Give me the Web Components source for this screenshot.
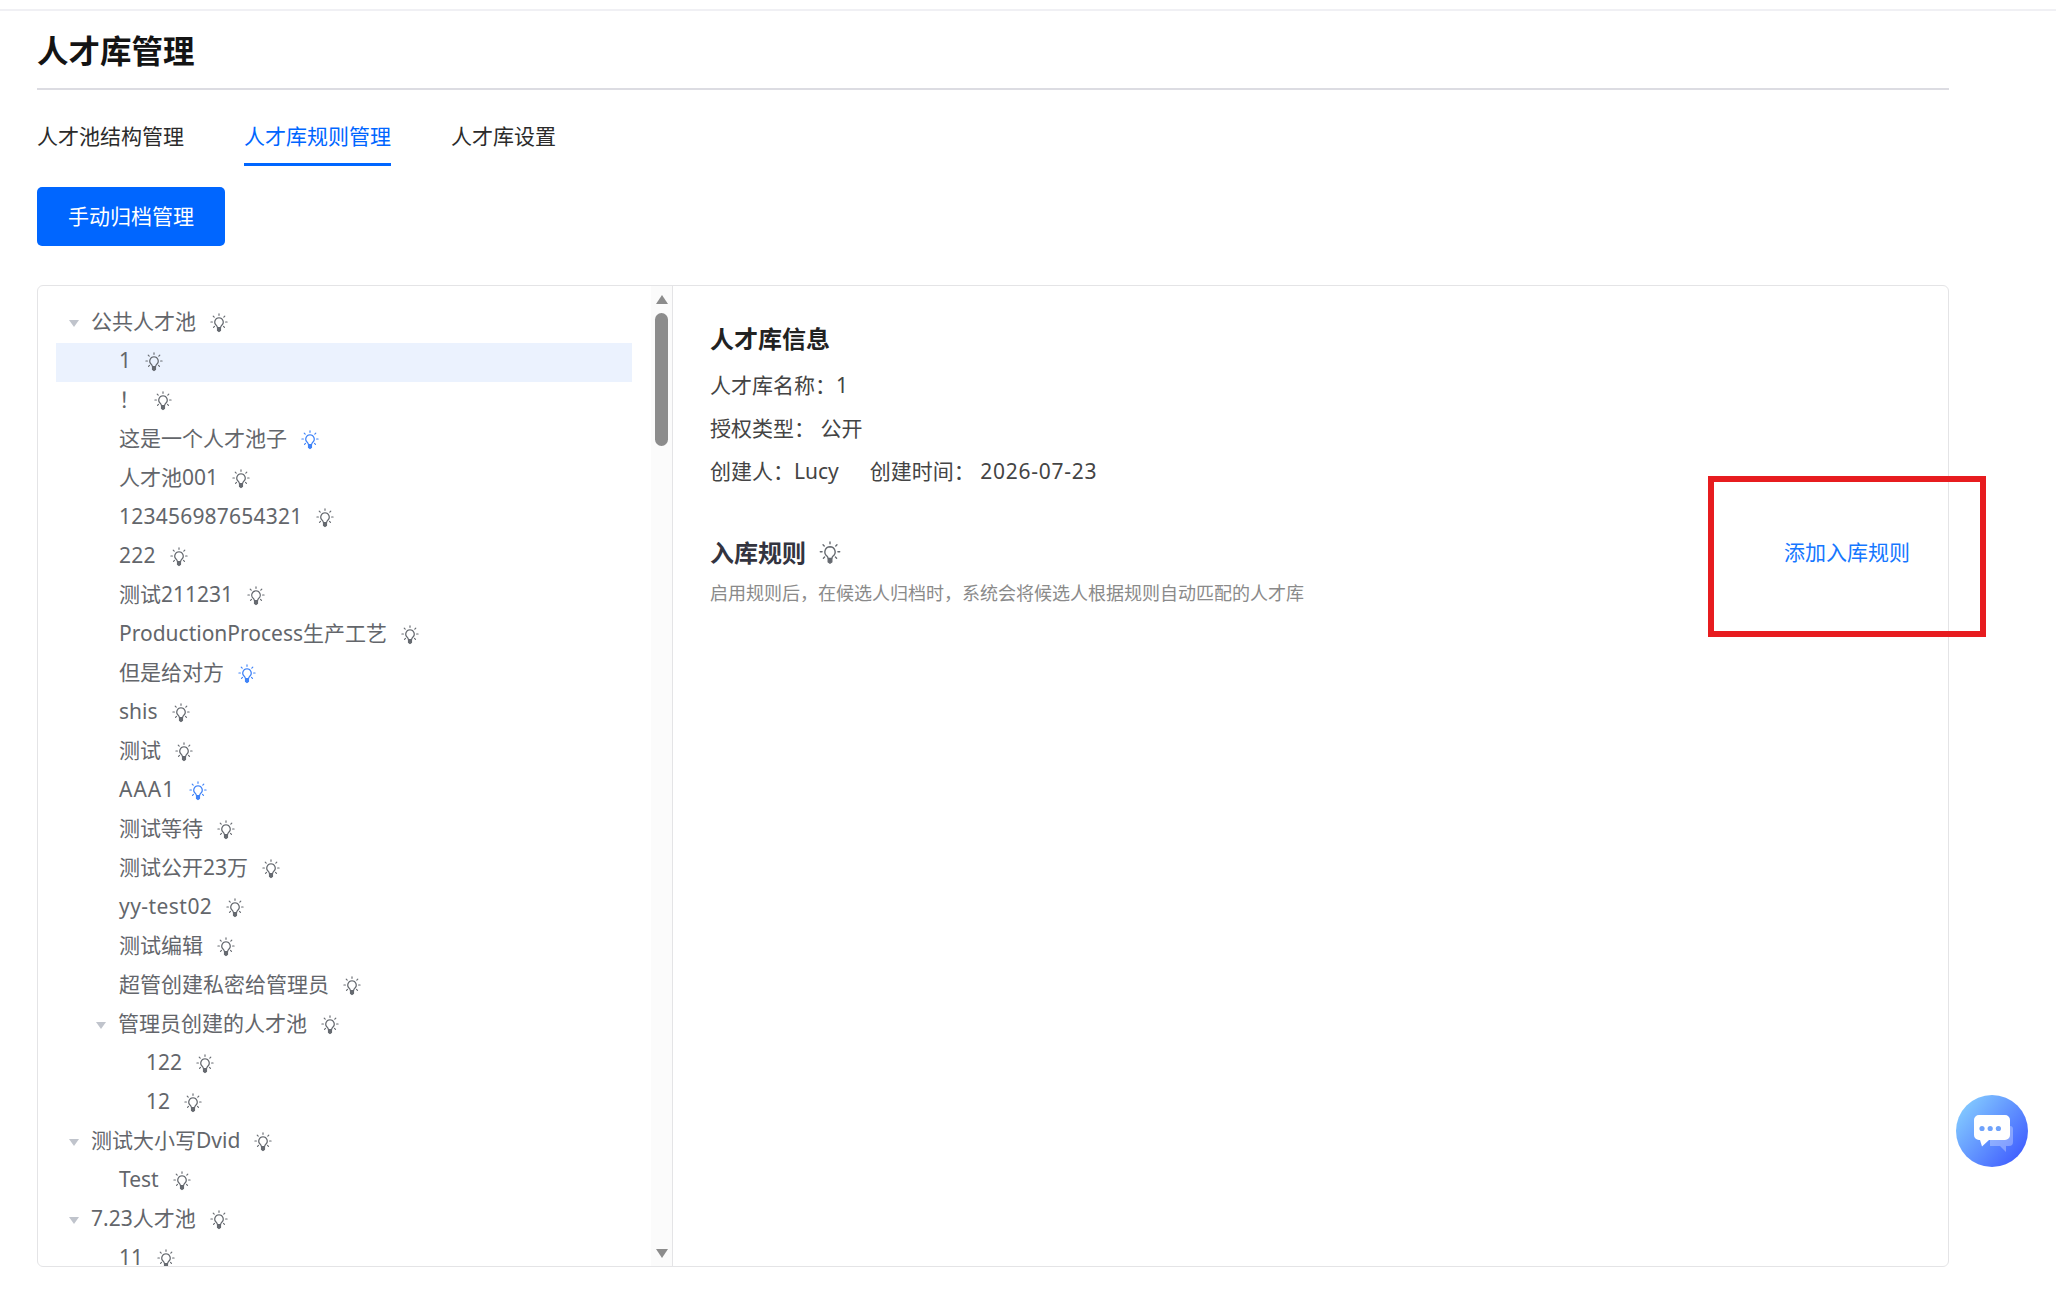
<!DOCTYPE html>
<html lang="zh-CN">
<head>
<meta charset="utf-8">
<title>人才库管理</title>
<style>
    html, body { margin: 0; padding: 0; background: #fff; }
    body { font-family: "Noto Sans", "Noto Sans CJK SC", "Liberation Sans", sans-serif; }
</style>
</head>
<body>
<talent-page>
    <talent-tabs slot="tabs"></talent-tabs>
    <talent-tree slot="tree"></talent-tree>
    <talent-info slot="info"></talent-info>
</talent-page>
<note-box></note-box>
<chat-button></chat-button>

<script>
/* Data for the tree: [label, level, has arrow, blue bulb, selected] */
const treeRows = [
    ['公共人才池', 0, true],
    ['1', 1, false, false, true],
    ['！', 1],
    ['这是一个人才池子', 1, false, true],
    ['人才池001', 1],
    ['123456987654321', 1],
    ['222', 1],
    ['测试211231', 1],
    ['ProductionProcess生产工艺', 1],
    ['但是给对方', 1, false, true],
    ['shis', 1],
    ['测试', 1],
    ['AAA1', 1, false, true],
    ['测试等待', 1],
    ['测试公开23万', 1],
    ['yy-test02', 1],
    ['测试编辑', 1],
    ['超管创建私密给管理员', 1],
    ['管理员创建的人才池', 1, true],
    ['122', 2],
    ['12', 2],
    ['测试大小写Dvid', 0, true],
    ['Test', 1],
    ['7.23人才池', 0, true],
    ['11', 1]
];

// Reference font runs a bit wider on these labels
const labelSpacing = {
    '123456987654321': '0.22px',
    '222': '0.3px',
    'AAA1': '1px',
    'yy-test02': '0.45px'
};

/**
 * Small light bulb shown beside tree rows and the rules heading
 */
class BulbIcon extends HTMLElement {
    connectedCallback() {
        const root = this.attachShadow({mode: 'open'});
        root.innerHTML = `
            <style>
                :host { display: inline-flex; color: #666a70; flex: none; margin-bottom: 1px; }
                :host([blue]) { color: #3f83f8; }
                svg { display: block; width: var(--bulb-w, 18px); height: var(--bulb-h, 20px); }
            </style>
            <svg viewBox="0 0 18 20" fill="none" stroke="currentColor" stroke-width="1.15" stroke-linecap="round">
                <path d="M9 4.8a4.3 4.3 0 0 0-2.6 7.7c.6.5.9 1.1 1 2h3.2c.1-.9.4-1.500 1-2A4.300 4.300 0 0 0 9 4.800z"/>
                <path d="M7.500 15.400h3v2.100l-1.500 1-1.500-1z" fill="currentColor"/>
                <path d="M9 .8v1.500M3.200 3.200l1 1M14.800 3.200l-1 1M.9 9h1.500M15.600 9h1.500M3.500 14.300l1-1M14.500 14.300l-1-1"/>
            </svg>`;
    }
}
customElements.define('bulb-icon', BulbIcon);

/**
 * Page frame: title, tabs, button and the two pane card
 */
const pageTmpl = document.createElement('template');
pageTmpl.innerHTML = `
    <style>
        :host { display: block; border-top: 2px solid #f0f0f4; margin-top: 9px; padding: 0 107px 0 37px; color: #333; }
        h1 { margin: 0; height: 79px; line-height: 79px; box-sizing: border-box; border-bottom: 2px solid #dcdce2;
             font-size: 31.5px; font-weight: 700; color: #141414; }
        button { display: block; width: 188px; height: 59px; margin: 21px 0 39px; padding: 0 0 3px; border: 0; border-radius: 5px;
                 background: #0066ff; color: #fff; font: inherit; font-size: 21px; }
        .card { display: flex; height: 982px; box-sizing: border-box; border: 1px solid #e4e4e6; border-radius: 6px; overflow: hidden; }
        .left { flex: none; width: 634px; display: flex; border-right: 1px solid #e4e4e6; }
        .right { flex: 1; min-width: 0; }
    </style>
    <h1>人才库管理</h1>
    <slot name="tabs"></slot>
    <button type="button">手动归档管理</button>
    <div class="card">
        <div class="left"><slot name="tree"></slot></div>
        <div class="right"><slot name="info"></slot></div>
    </div>
`;
class TalentPage extends HTMLElement {
    constructor() {
        super();
        this.attachShadow({mode: 'open'}).appendChild(pageTmpl.content.cloneNode(true));
    }
}
customElements.define('talent-page', TalentPage);

class TalentTabs extends HTMLElement {
    constructor() {
        super();
        this.attachShadow({mode: 'open'}).innerHTML = `
            <style>
                :host { display: flex; gap: 60px; padding-top: 19px; font-size: 21px; color: #2b2b2b; }
                span { display: block; height: 57px; line-height: 54px; box-sizing: border-box; white-space: nowrap; }
                .on { color: #0066ff; border-bottom: 3px solid #0066ff; }
            </style>
            <span>人才池结构管理</span>
            <span class="on">人才库规则管理</span>
            <span>人才库设置</span>`;
    }
}
customElements.define('talent-tabs', TalentTabs);

/**
 * Tree list with a hand drawn scrollbar column
 */
class TalentTree extends HTMLElement {
    constructor() {
        super();
        const root = this.attachShadow({mode: 'open'});
        root.innerHTML = `
            <style>
                :host { display: flex; width: 100%; height: 100%; font-size: 21px; color: #63666b; }
                .list { flex: 1; min-width: 0; overflow: hidden; padding: 18px 19px 0 18px; }
                .row { display: flex; align-items: center; gap: 14px; height: 39px; line-height: 35px; white-space: nowrap; }
                .row.sel { background: #ebf2fe; }
                .row span { margin-bottom: 4px; }
                .arrow { width: 0; height: 0; margin-left: -23px; margin-right: -2px; border: 5.5px solid transparent;
                         border-top: 7px solid #c0c4cc; border-bottom: 0; }
                .bar { flex: none; width: 21px; background: #fbfbfb; display: flex; flex-direction: column; align-items: center; padding: 9px 0 8px; box-sizing: border-box; }
                .up, .down { width: 0; height: 0; border: 6px solid transparent; }
                .up { border-bottom: 9px solid #8c8c8c; border-top: 0; }
                .down { border-top: 9px solid #8c8c8c; border-bottom: 0; margin-top: auto; }
                .thumb { width: 13px; height: 133px; margin-top: 9px; border-radius: 7px; background: #8c8c8c; }
            </style>
            <div class="list"></div>
            <div class="bar"><div class="up"></div><div class="thumb"></div><div class="down"></div></div>`;
        const list = root.querySelector('.list');
        treeRows.forEach(([label, level, hasArrow, blue, selected]) => {
            const row = document.createElement('div');
            row.className = selected ? 'row sel' : 'row';
            row.style.paddingLeft = (36 + level * 27) + 'px';
            if (hasArrow) {
                const arrow = document.createElement('i');
                arrow.className = 'arrow';
                row.appendChild(arrow);
            }
            const text = document.createElement('span');
            text.textContent = label;
            if (labelSpacing[label]) {
                text.style.letterSpacing = labelSpacing[label];
            }
            row.appendChild(text);
            const bulb = document.createElement('bulb-icon');
            if (blue) {
                bulb.setAttribute('blue', '');
            }
            row.appendChild(bulb);
            list.appendChild(row);
        });
    }
}
customElements.define('talent-tree', TalentTree);

/**
 * Right pane: library details and the rules section
 */
class TalentInfo extends HTMLElement {
    constructor() {
        super();
        this.attachShadow({mode: 'open'}).innerHTML = `
            <style>
                :host { display: block; padding: 35px 38px 0 37px; font-size: 21px; color: #444; }
                h2 { margin: 0; font-size: 24px; line-height: 36px; font-weight: 700; color: #222; }
                p { margin: 0; height: 43px; line-height: 43px; white-space: pre; }
                .first { margin-top: 7px; }
                .gap { margin-left: 31px; }
                .date { letter-spacing: 0.75px; }
                .rules { display: flex; align-items: center; gap: 13px; margin-top: 42px; height: 36px; --bulb-w: 22px; --bulb-h: 24px; }
                .rules h2 { color: #33343f; }
                .add { margin: 0 0 5px auto; color: #1677ff; }
                .desc { margin-top: 7px; font-size: 18px; line-height: 30px; color: #8a8a8a; }
            </style>
            <h2>人才库信息</h2>
            <p class="first">人才库名称：1</p>
            <p>授权类型： 公开</p>
            <p>创建人：Lucy<span class="gap">创建时间： <span class="date">2026-07-23</span></span></p>
            <div class="rules"><h2>入库规则</h2><bulb-icon></bulb-icon><span class="add">添加入库规则</span></div>
            <div class="desc">启用规则后，在候选人归档时，系统会将候选人根据规则自动匹配的人才库</div>`;
    }
}
customElements.define('talent-info', TalentInfo);

// Red annotation lying over the page
class NoteBox extends HTMLElement {
    constructor() {
        super();
        this.attachShadow({mode: 'open'}).innerHTML = `
            <style>
                :host { display: block; position: absolute; left: 1708px; top: 476px; width: 278px; height: 161px;
                        box-sizing: border-box; border: 6px solid #e71c1f; }
            </style>`;
    }
}
customElements.define('note-box', NoteBox);

// Floating chat button
class ChatButton extends HTMLElement {
    constructor() {
        super();
        this.attachShadow({mode: 'open'}).innerHTML = `
            <style>
                :host { display: block; position: absolute; left: 1956px; top: 1095px; width: 72px; height: 72px; }
                svg { display: block; }
            </style>
            <svg width="72" height="72" viewBox="0 0 72 72">
                <defs><linearGradient id="g" x1="0.1" y1="0.15" x2="0.95" y2="0.85">
                    <stop offset="0" stop-color="#82c8ff"/><stop offset="1" stop-color="#3f5cff"/>
                </linearGradient></defs>
                <circle cx="36" cy="36" r="36" fill="url(#g)"/>
                <path d="M34 31h20a3 3 0 0 1 3 3v13a4 4 0 0 1-4 4h-3v6l-6-6h-10z" fill="#fff" opacity=".3"/>
                <path d="M23 20h26a5 5 0 0 1 5 5v15a5 5 0 0 1-5 5H33l-7 6.500-2-6.500h-1a5 5 0 0 1-5-5V25a5 5 0 0 1 5-5z" fill="#fff"/>
                <circle cx="26" cy="33.500" r="2.600" fill="#6fa2fb"/>
                <circle cx="34.200" cy="33.500" r="2.600" fill="#6fa2fb"/>
                <circle cx="42.400" cy="33.500" r="2.600" fill="#6fa2fb"/>
            </svg>`;
    }
}
customElements.define('chat-button', ChatButton);
</script>
</body>
</html>
